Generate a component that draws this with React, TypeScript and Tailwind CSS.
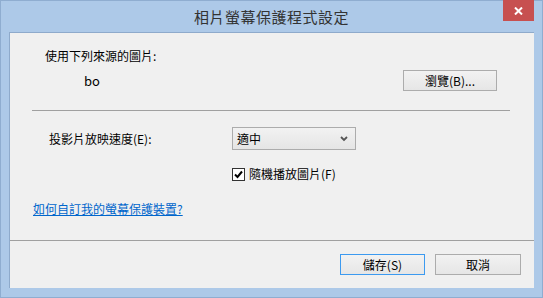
// Windows 8 style "photo screensaver settings" dialog.
const font = { fontFamily: '"Noto Sans CJK TC", "Noto Sans", sans-serif' };

function Button({ label, focused, className = "" }: { label: string; focused?: boolean; className?: string }) {
  return (
    <div
      className={`flex h-[21px] items-center justify-center border bg-gradient-to-b from-[#f2f2f2] to-[#e6e6e6] text-[12px] leading-none text-black ${
        focused ? "border-[#3c9af0]" : "border-[#acacac]"
      } ${className}`}
    >
      {label}
    </div>
  );
}

export default function App() {
  return (
    <div className="h-[298px] w-[543px] border border-[#8fadd0] bg-[#adc9e8]" style={font}>
      {/* title bar */}
      <div className="relative flex h-[31px] items-center justify-center">
        <span className="text-[15px] leading-none tracking-[0.5px] text-[#333]">相片螢幕保護程式設定</span>
        <div className="absolute right-[8px] top-[-1px] flex h-[21px] w-[31px] items-center justify-center bg-[#c75050]">
          <svg width="9" height="8" viewBox="0 0 9 8">
            <path d="M1 0.5 L8 7.5 M8 0.5 L1 7.5" stroke="white" strokeWidth="2" />
          </svg>
        </div>
      </div>

      {/* client area */}
      <div className="ml-[8px] flex h-[256px] w-[525px] flex-col border-l border-t border-[#8eaacb] bg-[#f0f0f0]">
        <div className="flex h-[207px] flex-col">
          <div className="ml-[35px] mt-[15px] text-[12px] leading-[16px] text-black">使用下列來源的圖片:</div>
          <div className="mt-[6px] flex h-[21px] items-center">
            <span className="ml-[74px] text-[13px] leading-none text-black">bo</span>
            <Button label="瀏覽(B)..." className="ml-auto mr-[37px] w-[94px]" />
          </div>
          <div className="ml-[22px] mr-[24px] mt-[19px] h-px bg-[#a0a0a0]" />
          <div className="mt-[16px] flex h-[23px] items-center">
            <span className="ml-[39px] w-[183px] text-[12px] leading-none text-black">投影片放映速度(E):</span>
            <div className="flex h-[23px] w-[124px] items-center justify-between border border-[#acacac] bg-gradient-to-b from-[#f2f2f2] to-[#e5e5e5] pl-[4px] pr-[7px]">
              <span className="text-[12px] leading-none text-black">適中</span>
              <svg width="8" height="6" viewBox="0 0 8 6">
                <path d="M1 1 L4 4 L7 1" stroke="#555" strokeWidth="1.8" fill="none" />
              </svg>
            </div>
          </div>
          <div className="ml-[222px] mt-[17px] flex h-[14px] items-center gap-[4px]">
            <div className="flex h-[13px] w-[13px] items-center justify-center border border-[#333] bg-white">
              <svg width="9" height="9" viewBox="0 0 9 9">
                <path d="M1 4.5 L3.5 7 L8 1.5" stroke="black" strokeWidth="2" fill="none" />
              </svg>
            </div>
            <span className="text-[12px] leading-none text-black">隨機播放圖片(F)</span>
          </div>
          <div className="ml-[23px] mt-[20px] text-[12px] leading-[16px] text-[#0066cc] underline">如何自訂我的螢幕保護裝置?</div>
        </div>
        <div className="flex flex-1 items-start justify-end gap-[10px] border-t border-[#a0a0a0] pr-[13px] pt-[13px]">
          <Button label="儲存(S)" focused className="w-[85px]" />
          <Button label="取消" className="w-[86px]" />
        </div>
      </div>
    </div>
  );
}
